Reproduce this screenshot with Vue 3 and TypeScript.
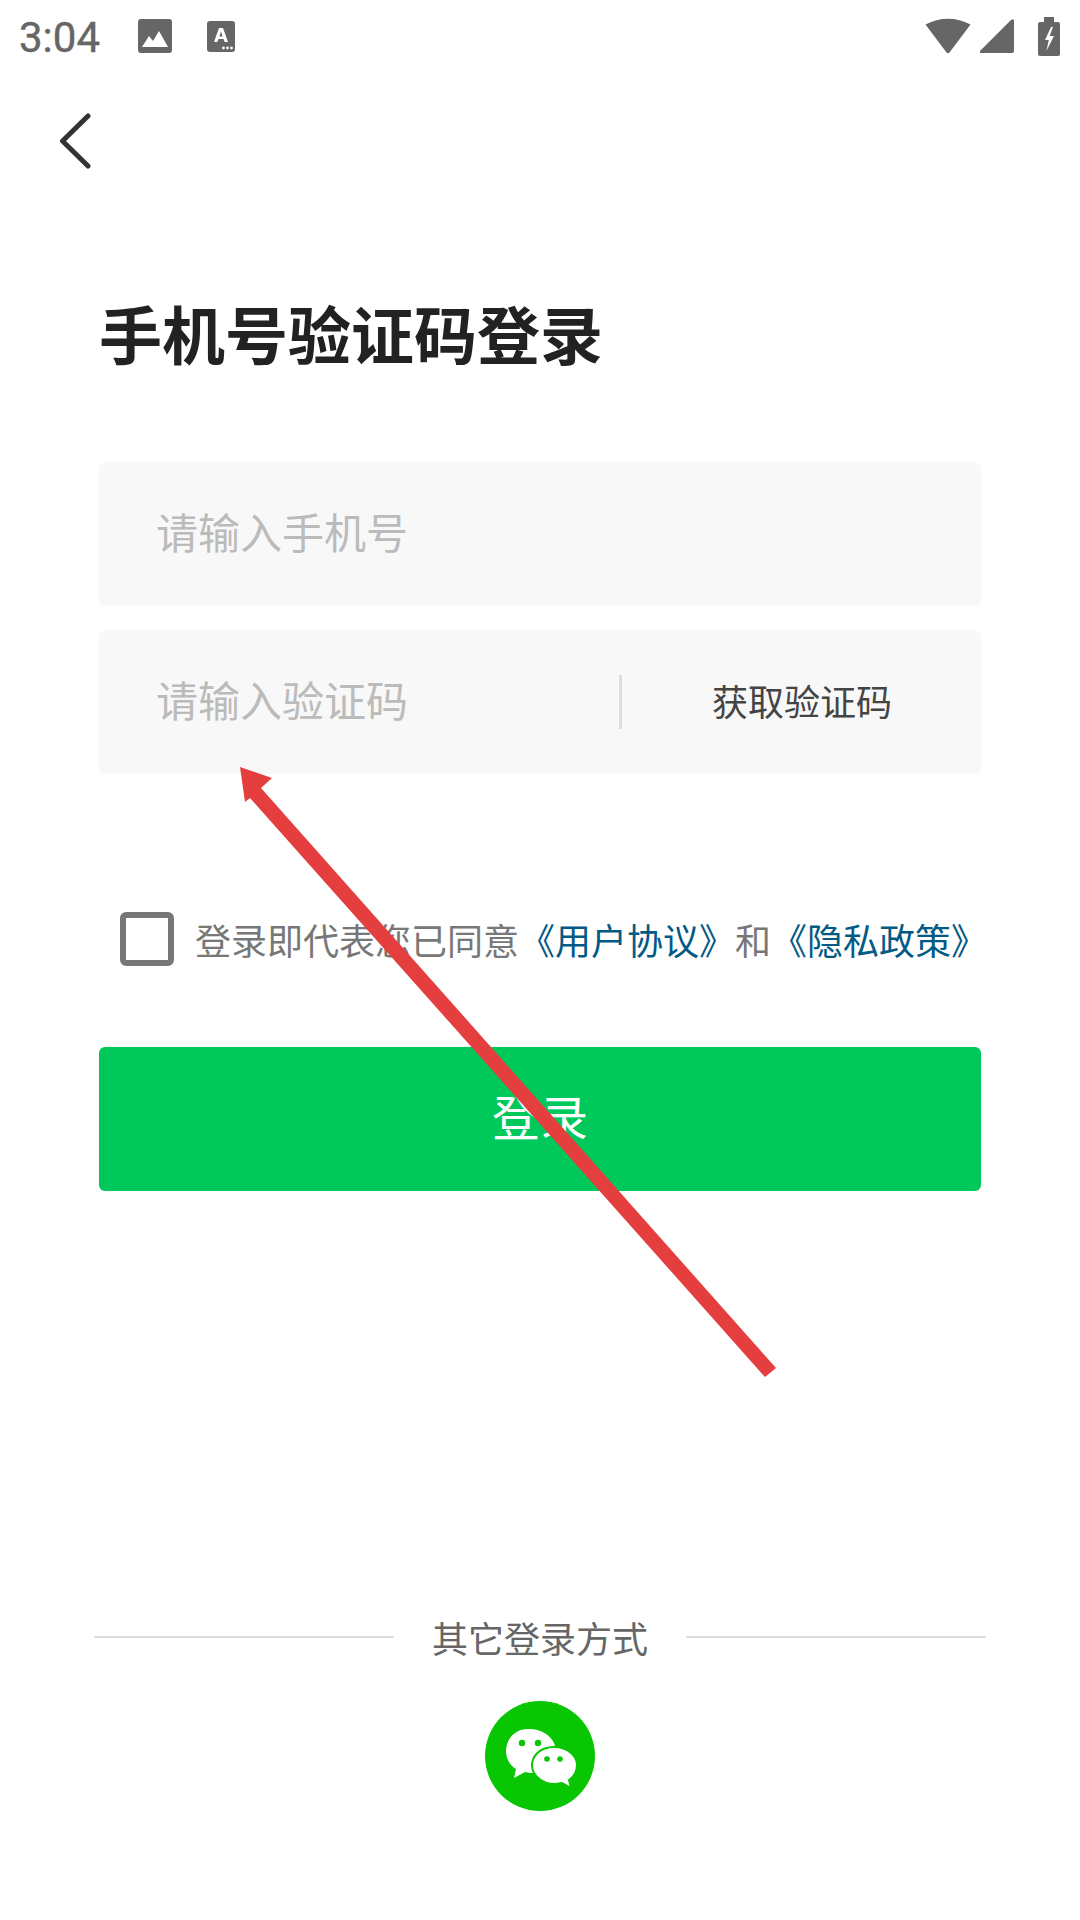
<template>
  <div class="page">
    <header class="status-bar">
      <span class="status-time">3:04</span>
      <svg class="icon-image" viewBox="0 0 34 34" aria-hidden="true">
        <rect x="0" y="0" width="34" height="34" rx="3" fill="#666" />
        <path d="M4 28 L11 17 L15 22 L21 12 L30 28 Z" fill="#fff" />
      </svg>
      <svg class="icon-a" viewBox="0 0 28 31" aria-hidden="true">
        <rect x="0" y="0" width="28" height="31" rx="3" fill="#666" />
        <path d="M7 21 L12 7 H16 L21 21 H17.6 L16.6 18 H11.4 L10.4 21 Z M12.4 15.4 H15.6 L14 10.6 Z" fill="#fff" fill-rule="evenodd" />
        <circle cx="16.5" cy="27" r="1.4" fill="#fff" />
        <circle cx="20.5" cy="27" r="1.4" fill="#fff" />
        <circle cx="24.5" cy="27" r="1.4" fill="#fff" />
      </svg>
      <div class="status-right">
        <svg class="icon-wifi" viewBox="0 0 46 36" aria-hidden="true">
          <path d="M0.5 6.5 Q23 -5 45.5 6.5 L24.5 34.5 Q23 36 21.5 34.5 Z" fill="#666" />
        </svg>
        <svg class="icon-signal" viewBox="0 0 34 34" aria-hidden="true">
          <path d="M0 32 L31 1 Q34 -1 34 2 V32 Q34 34 32 34 H1 Q-1 34 0 32 Z" fill="#666" />
        </svg>
        <svg class="icon-battery" viewBox="0 0 22 39" aria-hidden="true">
          <path d="M6 0 H16 V5 H20 Q22 5 22 7 V37 Q22 39 20 39 H2 Q0 39 0 37 V7 Q0 5 2 5 H6 Z" fill="#666" />
          <path d="M13 10 L7 23 H10.8 L8.4 34 L16 19 H11.6 L15 10 Z" fill="#fff" />
        </svg>
      </div>
    </header>

    <button class="back" type="button" aria-label="返回">
      <svg viewBox="0 0 32 58" aria-hidden="true">
        <path d="M29 3 L3.5 28 L29 53" fill="none" stroke="#333" stroke-width="5" stroke-linecap="round" stroke-linejoin="round" />
      </svg>
    </button>

    <main class="form">
      <h1 class="title">手机号验证码登录</h1>

      <div class="field">
        <span class="placeholder">{{ phonePlaceholder }}</span>
      </div>
      <div class="field field-code">
        <span class="placeholder">{{ codePlaceholder }}</span>
        <span class="code-btn">获取验证码</span>
      </div>

      <div class="agree">
        <span class="checkbox"></span>
        <p class="agree-text">登录即代表您已同意<a class="link">《用户协议》</a>和<a class="link">《隐私政策》</a></p>
      </div>

      <button class="submit" type="button">登录</button>
    </main>

    <footer class="other">
      <div class="other-title">
        <span class="rule"></span>
        <span class="other-label">其它登录方式</span>
        <span class="rule"></span>
      </div>
      <div class="wechat">
        <svg viewBox="0 0 110 110" aria-hidden="true">
          <circle cx="55" cy="55" r="55" fill="#09c603" />
          <path d="M44 28 C26 28 21 42 21 50 C21 59 26 65 31 68 L29 77 L40 71 C44 72 47 72 49 72 L70 44 C66 34 56 28 44 28 Z" fill="#fff" />
          <path d="M69 46 C54 46 47 56 47 64 C47 75 58 83 69 83 C72 83 75 82 77 82 L86 87 L84 79 C90 75 92 69 92 64 C92 56 84 46 69 46 Z" fill="#fff" stroke="#09c603" stroke-width="2" />
          <circle cx="37" cy="42" r="3.2" fill="#09c603" />
          <circle cx="53" cy="42" r="3.2" fill="#09c603" />
          <circle cx="62" cy="58" r="2.8" fill="#09c603" />
          <circle cx="75" cy="58" r="2.8" fill="#09c603" />
        </svg>
      </div>
    </footer>

    <!-- annotation drawn over the screenshot -->
    <svg class="annotation" viewBox="0 0 1080 1920" aria-hidden="true">
      <path d="M240 767 L272 778 L261 788 L776 1368 L765 1377 L250 798 L245 802 Z" fill="#e53e3e" />
    </svg>
  </div>
</template>

<script setup lang="ts">
const phonePlaceholder = '请输入手机号'
const codePlaceholder = '请输入验证码'
</script>

<style>
html, body { background: #fff; }
</style>

<style scoped>
.page { position: relative; width: 1080px; height: 1920px; overflow: hidden; background: #fff; font-family: "Noto Sans CJK SC", "Noto Sans", sans-serif; }
.status-bar { display: flex; align-items: center; height: 72px; padding: 0 20px 0 19px; }
.status-time { width: 119px; margin-top: 3px; color: #666; font-family: Roboto, sans-serif; font-size: 42px; line-height: 69px; -webkit-text-stroke: 0.4px #666; }
.icon-image { width: 34px; height: 34px; }
.icon-a { width: 28px; height: 31px; margin-left: 35px; }
.status-right { display: flex; align-items: center; margin-left: auto; }
.icon-wifi { width: 46px; height: 36px; }
.icon-signal { width: 34px; height: 34px; margin-left: 9px; }
.icon-battery { width: 22px; height: 39px; margin-left: 24px; }
.back { display: block; width: 32px; height: 58px; margin: 41px 0 0 59px; padding: 0; border: 0; background: none; }
.back svg { display: block; width: 100%; height: 100%; }
.form { display: flex; flex-direction: column; padding: 0 99px; }
.title { margin: 111px 0 0; height: 100px; color: #222; font-size: 63px; font-weight: 700; line-height: 100px; }
.field { display: flex; align-items: center; height: 144px; margin-top: 24px; padding-left: 57px; border-radius: 6px; background: #f8f8f8; }
.form .title + .field { margin-top: 80px; }
.placeholder { flex: none; margin-top: -6px; color: #bbb; font-size: 42px; line-height: 1; }
.field-code .placeholder { flex: 0 0 463px; }
.code-btn { flex: 1; height: 54px; padding-left: 90px; border-left: 3px solid #ddd; color: #444; font-size: 36px; line-height: 50px; white-space: nowrap; }
.agree { display: flex; align-items: center; gap: 21px; margin-top: 138px; padding-left: 21px; }
.checkbox { box-sizing: border-box; flex: none; width: 54px; height: 54px; border: 6px solid #777; border-radius: 6px; }
.agree-text { margin: 0; color: #777; font-size: 36px; line-height: 50px; white-space: nowrap; }
.link { color: #035a85; }
.submit { display: block; width: 100%; height: 144px; margin-top: 81px; padding: 0 0 8px; border: 0; border-radius: 6px; background: #00c85a; color: #fff; font-family: inherit; font-size: 48px; }
.other { position: absolute; left: 94px; right: 94px; top: 1613px; display: flex; flex-direction: column; align-items: center; }
.other-title { display: flex; align-items: center; width: 100%; height: 48px; }
.rule { flex: 1; height: 2px; background: #ddd; }
.other-label { padding: 0 38px; color: #666; font-size: 36px; line-height: 46px; }
.wechat { width: 110px; height: 110px; margin-top: 40px; }
.wechat svg { display: block; width: 100%; height: 100%; }
.annotation { position: absolute; inset: 0; width: 1080px; height: 1920px; pointer-events: none; }
</style>
